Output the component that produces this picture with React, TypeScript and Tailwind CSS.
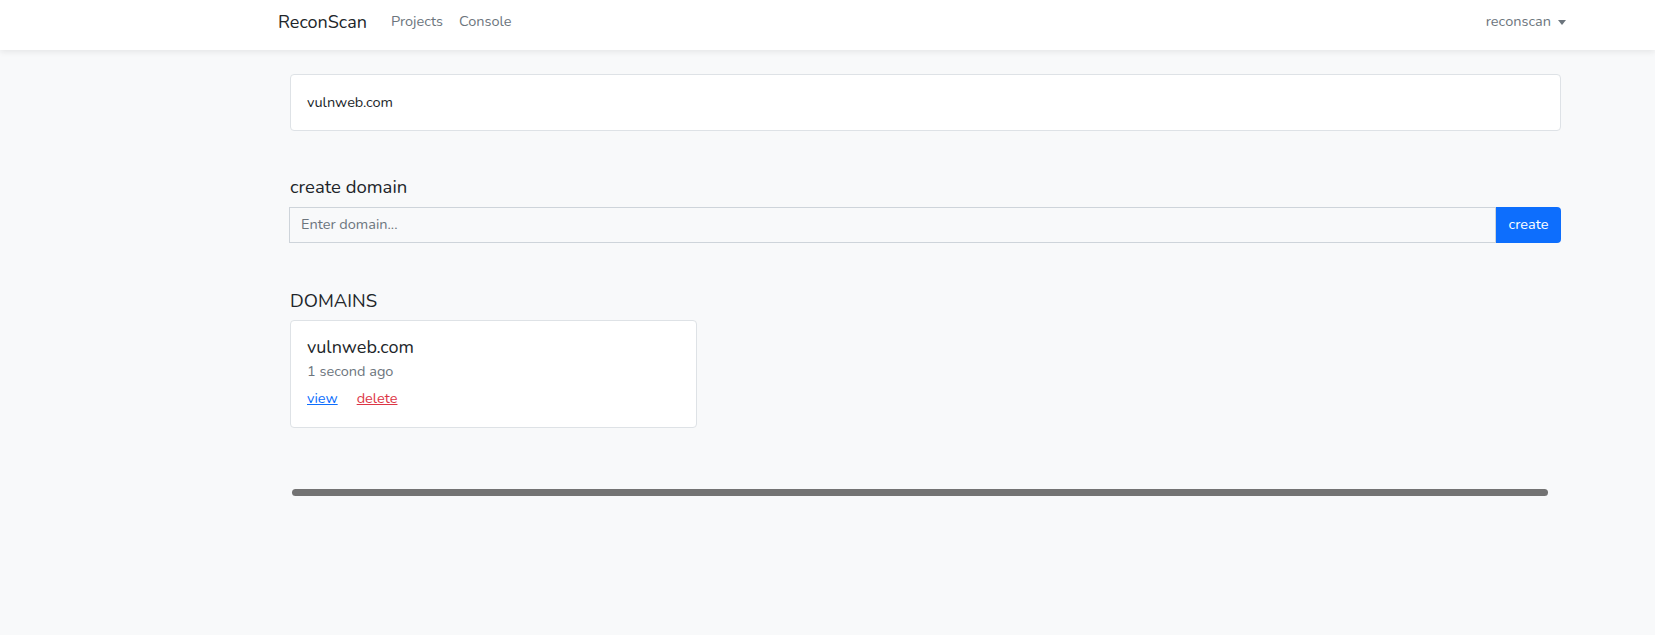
export default function App() {
  return (
    <div className="min-h-[635px] bg-[#f8f9fa] font-['Nunito','Noto_Sans',sans-serif] text-[#212529]">
      {/* Navbar */}
      <nav className="h-[50px] bg-white shadow-[0_2px_6px_rgba(0,0,0,0.08)] flex items-center pb-[6px] pl-[278px] pr-[89px]">
        <span className="text-[18px] text-[#212529] mr-[24px]">ReconScan</span>
        <a className="text-[14.5px] text-[#6c757d] mr-[16px]">Projects</a>
        <a className="text-[14.5px] text-[#6c757d]">Console</a>
        <div className="ml-auto flex items-center text-[14.5px] text-[#6c757d]">
          reconscan
          <span className="ml-[7px] w-0 h-0 border-l-[4px] border-r-[4px] border-t-[5px] border-l-transparent border-r-transparent border-t-[#6c757d]" />
        </div>
      </nav>

      <main className="ml-[290px] w-[1271px] pt-[24px]">
        <div className="h-[57px] bg-white border border-[#dee2e6] rounded-[4px] flex items-center px-[16px] text-[14.5px]">
          vulnweb.com
        </div>

        <h5 className="mt-[44px] text-[18.5px] leading-[24px]">create domain</h5>
        <div className="mt-[8px] flex h-[36px]">
          <input
            placeholder="Enter domain..."
            className="flex-1 -ml-[1px] bg-[#f8f9fa] border border-[#ced4da] px-[11px] text-[14.5px] text-[#212529] placeholder:text-[#6c757d] outline-none"
          />
          <button className="w-[65px] bg-[#0d6efd] text-white text-[14.5px] rounded-r-[4px]">create</button>
        </div>

        <h5 className="mt-[46px] text-[18.5px] leading-[24px]">DOMAINS</h5>
        <div className="mt-[7px] w-[407px] h-[108px] bg-white border border-[#dee2e6] rounded-[4px] px-[16px] pt-[14px]">
          <div className="text-[18px] leading-[24px]">vulnweb.com</div>
          <div className="text-[14.5px] text-[#6c757d] mt-[2px] leading-[20px]">1 second ago</div>
          <div className="mt-[7px] flex gap-[19px] text-[14.5px] leading-[20px]">
            <a className="text-[#0d6efd] underline">view</a>
            <a className="text-[#dc3545] underline">delete</a>
          </div>
        </div>

        <div className="mt-[61px] ml-[2px] w-[1256px] h-[7px] rounded-full bg-[#737373]" />
      </main>
    </div>
  );
}
